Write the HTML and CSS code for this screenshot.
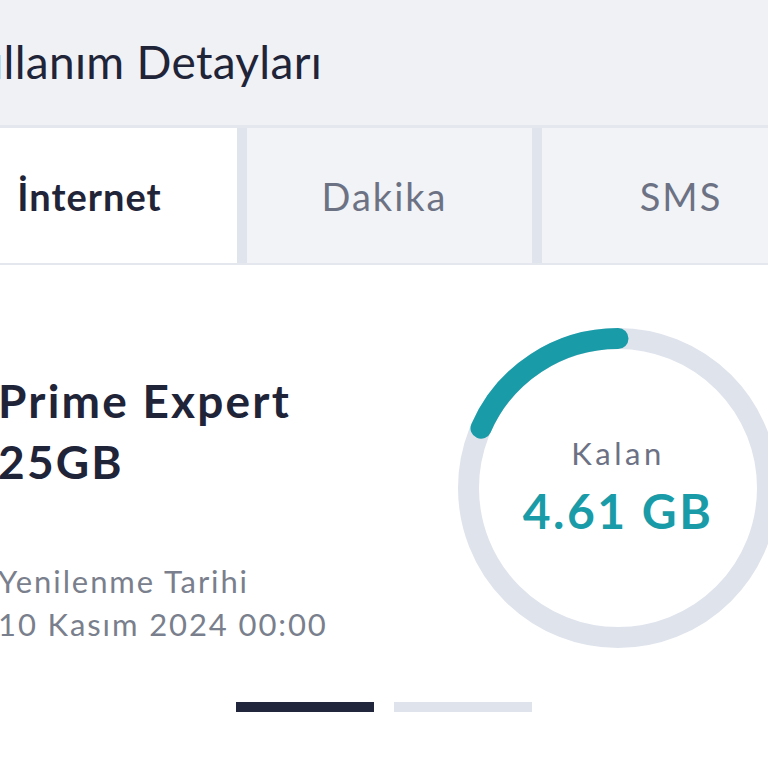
FILE: index.html
```html
<!DOCTYPE html>
<html lang="tr">
<head>
<meta charset="utf-8">
<title>Kullanım Detayları</title>
<link rel="stylesheet" href="styles.css">
</head>
<body>
<div class="page">
  <header class="header">
    <h1 class="title">Kullanım Detayları</h1>
  </header>
  <nav class="tabs">
    <div class="tab tab-active">İnternet</div>
    <div class="tab">Dakika</div>
    <div class="tab tab-last">SMS</div>
  </nav>
  <section class="usage">
    <div class="info">
      <h2 class="plan">Prime Expert<br>25GB</h2>
      <p class="renew">Yenilenme Tarihi<br>10 Kasım 2024 00:00</p>
    </div>
    <div class="gauge">
      <svg class="ring" width="320" height="320" viewBox="0 0 320 320">
        <circle cx="160" cy="160" r="149.5" fill="none" stroke="#dfe3ec" stroke-width="21"/>
        <path d="M160 10.5 A149.5 149.5 0 0 0 23 100.2" fill="none" stroke="#1a9ba8" stroke-width="21" stroke-linecap="round"/>
      </svg>
      <div class="gauge-text">
        <div class="gauge-label">Kalan</div>
        <div class="gauge-value">4.61 GB</div>
      </div>
    </div>
  </section>
  <div class="dots">
    <span class="dot dot-active"></span>
    <span class="dot"></span>
  </div>
</div>
</body>
</html>
```

FILE: styles.css
```css
html, body {
  margin: 0;
  padding: 0;
}
body {
  width: 768px;
  height: 768px;
  overflow: hidden;
  background: #ffffff;
  font-family: "Lato", "Noto Sans", sans-serif;
  color: #1f2438;
}
.page {
  width: 864px;
  margin-left: -48px;
}
.header {
  height: 128px;
  background: #eff1f5;
  border-bottom: 3px solid #e4e7ed;
  box-sizing: border-box;
  display: flex;
  align-items: center;
  padding-bottom: 2px;
}
.title {
  margin: 0 0 0 -4px;
  font-size: 46px;
  font-weight: 400;
  color: #1f2438;
  letter-spacing: 0.3px;
}
.tabs {
  display: grid;
  grid-template-columns: 285px 285px 1fr;
  gap: 10px;
  background: #e0e4ec;
  height: 137px;
  border-bottom: 2px solid #e4e7ed;
  box-sizing: border-box;
}
.tab {
  background: #f1f3f6;
  display: flex;
  align-items: center;
  justify-content: center;
  font-size: 38px;
  color: #6c7284;
  padding-right: 10px;
  letter-spacing: 2px;
}
.tab-active {
  background: #ffffff;
  font-weight: 700;
  color: #1f2438;
  letter-spacing: 1px;
}
.tab-last {
  padding-right: 0;
  padding-left: 4px;
}
.usage {
  display: flex;
  justify-content: space-between;
  padding: 63px 38px 0 46px;
}
.info {
  padding-top: 42px;
}
.plan {
  margin: 0;
  font-size: 46px;
  line-height: 61px;
  font-weight: 700;
  color: #1f2438;
  letter-spacing: 2.2px;
}
.renew {
  margin: 68px 0 0;
  font-size: 31px;
  line-height: 43px;
  color: #7a7f8d;
  letter-spacing: 1.9px;
}
.gauge {
  display: grid;
  width: 320px;
  height: 320px;
}
.ring, .gauge-text {
  grid-area: 1 / 1;
}
.gauge-text {
  display: flex;
  flex-direction: column;
  align-items: center;
  padding-top: 105px;
}
.gauge-label {
  font-size: 31px;
  line-height: 40px;
  color: #6c7284;
  letter-spacing: 3.5px;
}
.gauge-value {
  margin-top: 8px;
  font-size: 48px;
  line-height: 60px;
  font-weight: 700;
  color: #1a9ba8;
  letter-spacing: 2.5px;
}
.dots {
  display: flex;
  justify-content: center;
  gap: 20px;
  padding-top: 54px;
}
.dot {
  width: 138px;
  height: 10px;
  background: #dfe3ec;
}
.dot-active {
  background: #22263d;
}
```
